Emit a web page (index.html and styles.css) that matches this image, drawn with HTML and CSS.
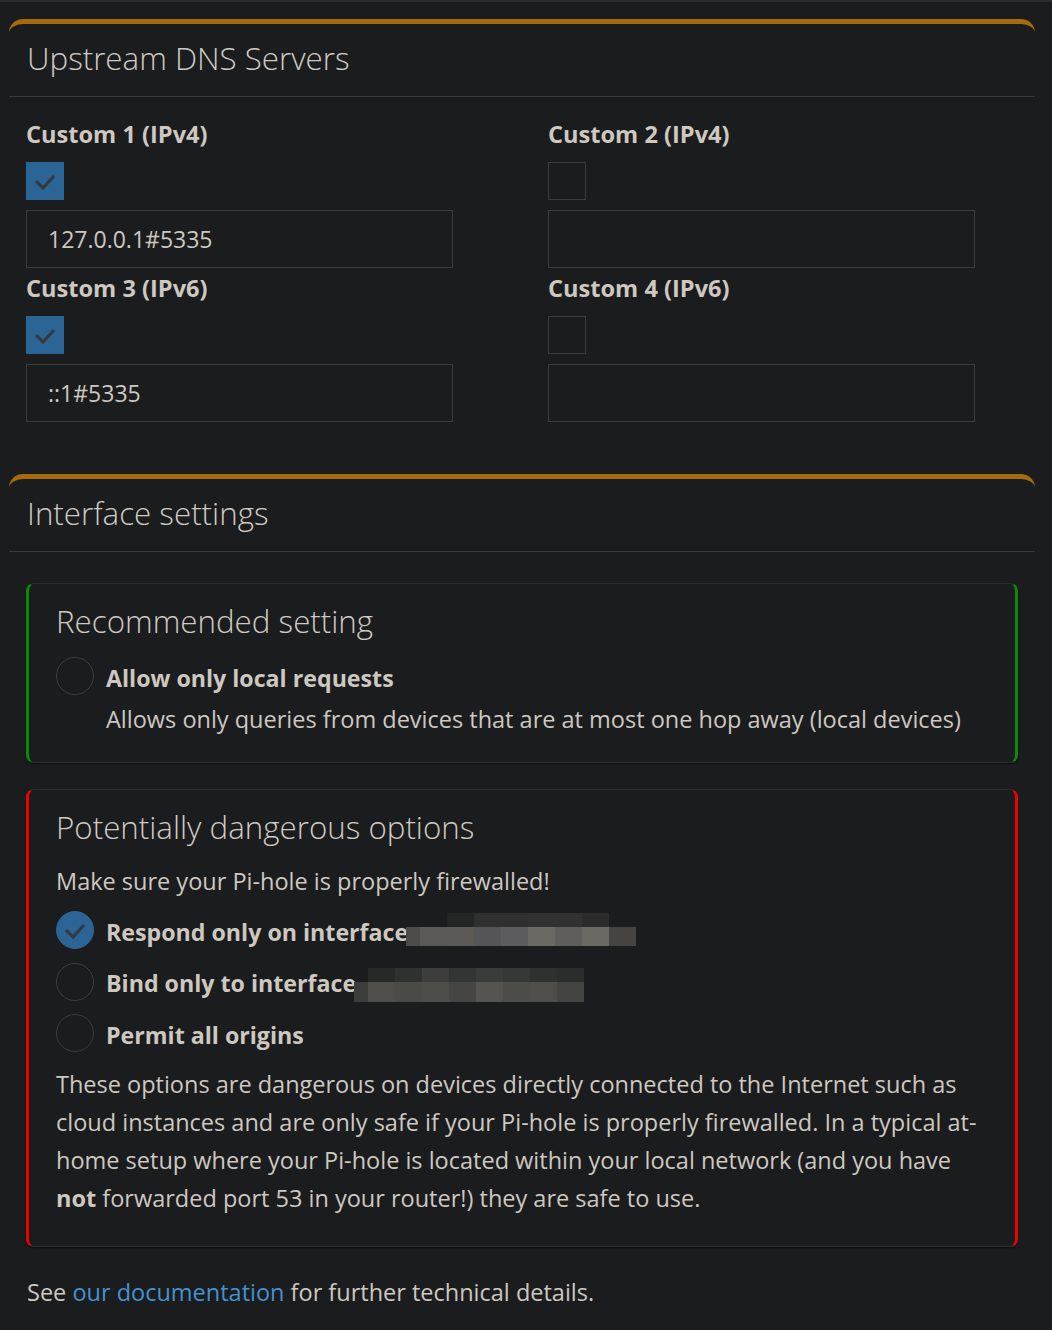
FILE: index.html
```html
<!DOCTYPE html>
<html lang="en">
<head>
<meta charset="utf-8">
<title>Pi-hole DNS settings</title>
<link rel="stylesheet" href="styles.css">
</head>
<body>
<div class="topline"></div>
<main class="page">
  <section class="box">
    <header class="box-header"><h3 class="box-title">Upstream DNS Servers</h3></header>
    <div class="box-body">
      <div class="dns-grid">
        <div class="dns-item">
          <div class="dns-label">Custom 1 (IPv4)</div>
          <span class="check on"><svg viewBox="0 0 38 38" width="38" height="38"><polyline points="10,19 17,26 28,14" /></svg></span>
          <div class="field">127.0.0.1#5335</div>
        </div>
        <div class="dns-item">
          <div class="dns-label">Custom 2 (IPv4)</div>
          <span class="check"></span>
          <div class="field"></div>
        </div>
        <div class="dns-item">
          <div class="dns-label">Custom 3 (IPv6)</div>
          <span class="check on"><svg viewBox="0 0 38 38" width="38" height="38"><polyline points="10,19 17,26 28,14" /></svg></span>
          <div class="field">::1#5335</div>
        </div>
        <div class="dns-item">
          <div class="dns-label">Custom 4 (IPv6)</div>
          <span class="check"></span>
          <div class="field"></div>
        </div>
      </div>
    </div>
  </section>

  <section class="box box-last">
    <header class="box-header"><h3 class="box-title">Interface settings</h3></header>
    <div class="box-body">
      <div class="callout callout-ok">
        <h4 class="callout-title">Recommended setting</h4>
        <div class="radio-row">
          <span class="radio"></span>
          <span class="radio-text">Allow only local requests</span>
        </div>
        <p class="radio-help">Allows only queries from devices that are at most one hop away (local devices)</p>
      </div>

      <div class="callout callout-danger">
        <h4 class="callout-title">Potentially dangerous options</h4>
        <p class="warn-line">Make sure your Pi-hole is properly firewalled!</p>
        <div class="radio-row">
          <span class="radio on"><svg viewBox="0 0 38 38" width="38" height="38"><polyline points="10,19 17,26 28,14" /></svg></span>
          <span class="radio-text">Respond only on interface</span>
          <span class="mosaic mosaic-a">
            <span class="mrow mrow-top">
              <i style="background:#242525"></i><i style="background:#2e2f2e"></i><i style="background:#2e2f2e"></i><i style="background:#303130"></i><i style="background:#303130"></i><i style="background:#2a2b2a"></i>
            </span>
            <span class="mrow">
              <i class="half" style="background:#4d4c49"></i><i style="background:#5a5955"></i><i style="background:#5b5a56"></i><i style="background:#56565a"></i><i style="background:#5c5c5e"></i><i style="background:#6b6964"></i><i style="background:#5f5e5a"></i><i style="background:#6a6964"></i><i style="background:#454443"></i>
            </span>
          </span>
        </div>
        <div class="radio-row">
          <span class="radio"></span>
          <span class="radio-text">Bind only to interface</span>
          <span class="mosaic mosaic-b">
            <span class="mrow mrow-top">
              <i style="background:#272828"></i><i style="background:#2f3030"></i><i style="background:#3c3d3c"></i><i style="background:#333434"></i><i style="background:#3a3b3b"></i><i style="background:#363737"></i><i style="background:#2f3030"></i><i style="background:#2b2c2c"></i>
            </span>
            <span class="mrow">
              <i class="half" style="background:#3c3c3a"></i><i style="background:#4f4e4b"></i><i style="background:#4a4a47"></i><i style="background:#4d4d4a"></i><i style="background:#454543"></i><i style="background:#555451"></i><i style="background:#4c4c49"></i><i style="background:#4f4e4b"></i><i style="background:#444442"></i>
            </span>
          </span>
        </div>
        <div class="radio-row">
          <span class="radio"></span>
          <span class="radio-text">Permit all origins</span>
        </div>
        <p class="danger-text">These options are dangerous on devices directly connected to the Internet such as cloud instances and are only safe if your Pi-hole is properly firewalled. In a typical at-home setup where your Pi-hole is located within your local network (and you have <strong>not</strong> forwarded port 53 in your router!) they are safe to use.</p>
      </div>

      <p class="see">See <a href="#" class="link">our documentation</a> for further technical details.</p>
    </div>
  </section>
</main>
</body>
</html>
```

FILE: styles.css
```css
html, body {
  margin: 0;
  padding: 0;
}
body {
  background: #1b1c1e;
  color: #cdc8c0;
  font-family: "Open Sans", "Noto Sans", sans-serif;
  font-size: 23.5px;
  line-height: 34px;
}
.topline {
  height: 2px;
  background: #2c2d2f;
}
.page {
  padding: 17px 17px 0 9px;
}
.box {
  border-top: 5px solid #a86b0b;
  border-radius: 14px 14px 0 0;
  margin-bottom: 35px;
}
.box-last {
  margin-bottom: 0;
}
.box-header {
  height: 73px;
  border-bottom: 1px solid #38393b;
  padding: 0 18px;
  box-sizing: border-box;
}
.box-title {
  margin: 0;
  font-weight: 300;
  font-size: 31.3px;
  line-height: 34px;
  padding-top: 17px;
  color: #cfcac3;
}
.box-body {
  padding: 17px;
}
.dns-grid {
  display: grid;
  grid-template-columns: 470px 470px;
  column-gap: 52px;
}
.dns-item {
  display: flex;
  flex-direction: column;
  align-items: flex-start;
}
.dns-label {
  font-weight: 700;
  font-size: 23.6px;
  line-height: 34px;
  padding-top: 3px;
  height: 34px;
  box-sizing: border-box;
}
.check {
  width: 38px;
  height: 38px;
  box-sizing: border-box;
  border: 1px solid #3c3d3f;
  margin-top: 14px;
  display: block;
}
.check.on {
  background: #2b6596;
  border-color: #2b6596;
}
.check svg, .radio svg {
  display: block;
  margin: -1px;
}
.check polyline, .radio polyline {
  fill: none;
  stroke: #35383b;
  stroke-width: 3;
}
.field {
  width: 427px;
  height: 58px;
  box-sizing: border-box;
  border: 1px solid #3c3d3f;
  margin-top: 10px;
  padding: 0 21px;
  line-height: 56px;
  font-size: 23px;
}

.callout {
  border: 1px solid #2c2d2f;
  border-radius: 8px;
  box-shadow: 0 1px 2px rgba(0, 0, 0, 0.5);
  padding: 0 27px;
  box-sizing: border-box;
}
.callout-ok {
  margin-top: 14px;
  border-left: 3px solid #0a8a0a;
  border-right: 3px solid #0a8a0a;
  height: 180px;
}
.callout-danger {
  margin-top: 26px;
  border-left: 3px solid #ee0000;
  border-right: 3px solid #ee0000;
  height: 458px;
}
.callout-title {
  margin: 0;
  font-weight: 300;
  font-size: 31.3px;
  line-height: 40px;
  padding-top: 17px;
  color: #cfcac3;
}
.radio-row {
  display: flex;
  align-items: flex-start;
  height: 38px;
}
.callout-ok .radio-row {
  margin-top: 16px;
}
.radio {
  width: 38px;
  height: 38px;
  border-radius: 50%;
  border: 1px solid #3c3d3f;
  box-sizing: border-box;
  flex: none;
}
.radio.on {
  background: #2b6596;
  border-color: #2b6596;
}
.radio-text {
  font-weight: 700;
  font-size: 23.2px;
  line-height: 34px;
  margin: 3.5px 0 0 12px;
  white-space: nowrap;
}
.radio-help {
  margin: 7px 0 0 50px;
  line-height: 34px;
}
.warn-line {
  margin: 17px 0 0;
  line-height: 34px;
}
.callout-danger .radio-row {
  margin-top: 13px;
}
.callout-danger .radio-row + .radio-row {
  margin-top: 13.5px;
}
.mosaic {
  display: flex;
  flex-direction: column;
  align-items: flex-start;
  margin-left: -2px;
}
.mosaic-a {
  margin-top: 2px;
}
.mosaic-a .mrow-top {
  margin-left: 41px;
}
.mosaic-b {
  margin-top: 5px;
}
.mosaic-b .mrow-top {
  margin-left: 14px;
}
.mrow {
  display: flex;
  height: 19px;
}
.mosaic-b .mrow {
  height: 20px;
}
.mosaic .mrow-top {
  height: 14px;
}
.mrow i {
  display: block;
  width: 27px;
}
.mrow i.half {
  width: 14px;
}
.danger-text {
  margin: 13px 0 0;
  line-height: 38px;
}
.danger-text strong {
  font-weight: 700;
}
.see {
  margin: 28px 0 0;
  line-height: 34px;
  padding-left: 1px;
}
.link {
  color: #4592cf;
  text-decoration: none;
}
```
